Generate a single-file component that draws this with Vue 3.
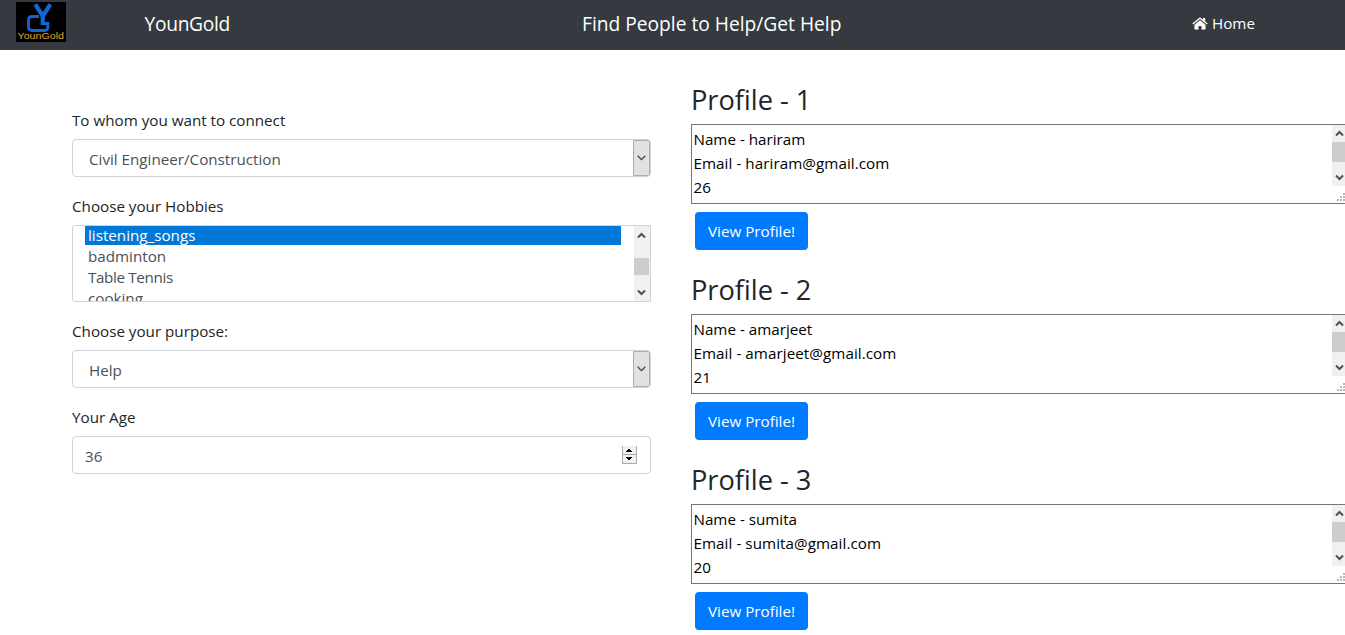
<script setup>
const hobbies = [
  { name: 'listening_songs', cls: 'h1' },
  { name: 'badminton', cls: 'h2' },
  { name: 'Table Tennis', cls: 'tight' },
  { name: 'cooking', cls: 'h4' },
]
const profiles = [
  { name: 'hariram', age: 26 },
  { name: 'amarjeet', age: 21 },
  { name: 'sumita', age: 20 },
]
</script>

<template>
  <div class="page">
    <header class="navbar">
      <svg class="logo" width="50" height="40" viewBox="0 0 50 40">
        <rect width="50" height="40" fill="#000" />
        <g fill="none" stroke="#1464d2">
          <path d="M19.300 2.300L26.800 14M34.300 2.300L26.800 14V23" stroke-width="4.300" />
          <path d="M23 14.500H16Q12.500 14.500 12.500 18V25Q12.500 28.500 16 28.500H28.500Q31.800 28.500 31.800 25.500V21.500H25" stroke-width="2.800" />
        </g>
        <text x="1.500" y="37" textLength="46.500" lengthAdjust="spacingAndGlyphs">YounGold</text>
      </svg>
      <span class="brand">YounGold</span>
      <span class="title">Find People to Help/Get Help</span>
      <a class="home">
        <svg width="16" height="13" viewBox="0 0 16 13" fill="#fff">
          <path d="M8 3.200L2.500 7.700V12Q2.500 12.500 3 12.500H6.500V9H9.500V12.500H13Q13.500 12.500 13.500 12V7.700Z" />
          <path d="M.3 6.600L7.300 .8Q8 .3 8.700 .8L11 2.700V1H13.200V4.500L15.700 6.600L14.900 7.600L8 2.100L1.100 7.600Z" />
        </svg>
        <span>Home</span>
      </a>
    </header>
    <main class="content">
      <form class="form">
        <label>To whom you want to connect</label>
        <div class="control select">
          <span>Civil Engineer/Construction</span>
          <i class="drop"><svg width="9" height="6" viewBox="0 0 9 6"><path d="M.7 .8L4.500 4.600L8.300 .8" /></svg></i>
        </div>
        <label>Choose your Hobbies</label>
        <div class="control list">
          <ul>
            <li v-for="(h, i) in hobbies" :key="h.name" :class="[h.cls, { selected: i === 0 }]">{{ h.name }}</li>
          </ul>
          <div class="scroll">
            <svg width="9" height="7" viewBox="0 0 9 7"><path d="M1 5.500L4.500 2L8 5.500" /></svg>
            <i class="thumb"></i>
            <svg width="9" height="7" viewBox="0 0 9 7"><path d="M1 1.500L4.500 5L8 1.500" /></svg>
          </div>
        </div>
        <label>Choose your purpose:</label>
        <div class="control select">
          <span>Help</span>
          <i class="drop"><svg width="9" height="6" viewBox="0 0 9 6"><path d="M.7 .8L4.500 4.600L8.300 .8" /></svg></i>
        </div>
        <label>Your Age</label>
        <div class="control number">
          <span>36</span>
          <svg class="spin" width="15" height="18" viewBox="0 0 15 18">
            <rect width="15" height="18" fill="#f0f0f0" />
            <path d="M.5 0V17.500H14.500V0M0 8.500H15" fill="none" stroke="#aaa" />
            <path d="M4 6H10V5H9V4H8V3H6V4H5V5H4ZM4 11H10V12H9V13H8V14H6V13H5V12H4Z" fill="#000" />
          </svg>
        </div>
      </form>
      <div class="profiles">
        <section v-for="(p, i) in profiles" :key="p.name" class="profile">
          <h3>Profile - {{ i + 1 }}</h3>
          <div class="area">
            <div class="text">
              <p>Name - {{ p.name }}</p>
              <p class="mail">Email - {{ p.name }}@gmail.com</p>
              <p>{{ p.age }}</p>
            </div>
            <div class="rail">
              <div class="scroll">
                <svg width="9" height="7" viewBox="0 0 9 7"><path d="M1 5.500L4.500 2L8 5.500" /></svg>
                <i class="thumb"></i>
                <svg width="9" height="7" viewBox="0 0 9 7"><path d="M1 1.500L4.500 5L8 1.500" /></svg>
              </div>
              <svg class="grip" width="11" height="8" viewBox="0 0 11 8" fill="#b8b8b8">
                <path d="M0 6h2v2H0zM3 6h2v2H3zM6 6h2v2H6zM9 6h2v2H9zM3 3h2v2H3zM6 3h2v2H6zM9 3h2v2H9zM6 0h2v2H6zM9 0h2v2H9z" />
              </svg>
            </div>
          </div>
          <button type="button">View Profile!</button>
        </section>
      </div>
    </main>
  </div>
</template>

<style>
body { margin: 0; background: #fff; }
</style>

<style scoped>
* { box-sizing: border-box; }
.page {
  width: 1345px; height: 635px; overflow: hidden; color: #212529;
  font: 15.2px/24px "Open Sans", "Noto Sans", sans-serif; white-space: nowrap;
}
.navbar { height: 50px; background: #343a40; color: #fff; display: flex; align-items: center; font-size: 19.2px; }
.logo { margin: -6px 0 0 16px; flex: none; }
.logo text { font: 9.5px "Liberation Sans", sans-serif; fill: #e0a020; }
.brand { margin-left: 78.5px; width: 437.5px; margin-top: -2px; letter-spacing: -.3px; }
.title { width: 610px; margin-top: -2px; }
.home { display: flex; align-items: center; gap: 4px; font-size: 15.2px; margin-top: -4px; }
.content { display: flex; }
.form { width: 579px; margin: 58px 40px 0 72px; flex: none; }
label { display: block; height: 24px; margin-bottom: 7px; }
.control { border: 1px solid #ced4da; border-radius: 4px; height: 38px; margin-bottom: 17px; color: #495057; display: flex; justify-content: space-between; overflow: hidden; }
.select > span { padding: 7px 0 0 16px; }
.drop { width: 17px; background: #e1e1e1; border: 1px solid #adadad; display: flex; align-items: center; justify-content: center; border-radius: 0 2px 2px 0; }
.drop svg { flex: none; }
.drop path { fill: none; stroke: #444; stroke-width: 1.3; }
.list { height: 77px; border-radius: 3px 0 0 3px; }
.list ul { list-style: none; margin: -2px 0 0; padding: 0 0 0 12px; width: 548px; }
.list li { height: 21px; line-height: 23px; padding-left: 3px; }
.list .tight { letter-spacing: -.35px; }
.list .selected { background: #0078d7; color: #fff; }
.scroll { width: 17px; background: #f0f0f0; display: flex; flex-direction: column; align-items: center; justify-content: space-between; padding: 5px 0; }
.scroll path { fill: none; stroke: #505050; stroke-width: 2; }
.list .scroll { width: 16px; padding: 6px 1px 5px 0; }
.thumb { width: 15px; background: #cdcdcd; height: 17px; margin-top: 5px; }
.number { padding: 7px 13px 0 12px; }
.spin { margin: 2px 0 0; }
.profiles { padding-top: 32px; }
.profile { height: 190px; }
h3 { margin: 0 0 8px; font-size: 27.2px; line-height: 36px; height: 34px; font-weight: 400; }
.area { width: 660px; height: 80px; border: 1px solid #767676; color: #000; display: flex; justify-content: space-between; overflow: hidden; }
.text { padding: 2px 2px 2px 1.5px; }
p { margin: 0; }
.mail { letter-spacing: .06px; }
.rail { width: 18px; }
.area .scroll { height: 61px; width: 15px; padding: 5px 0; }
.area .thumb { width: 15px; height: 20px; margin: 0; position: relative; top: -4px; }
.grip { display: block; margin: 7px 0 0 5px; }
button { display: block; margin: 8px 0 0 4px; width: 113px; height: 38px; border: 0; border-radius: 4px; background: #007bff; color: #fff; font: inherit; padding: 0; }
</style>
